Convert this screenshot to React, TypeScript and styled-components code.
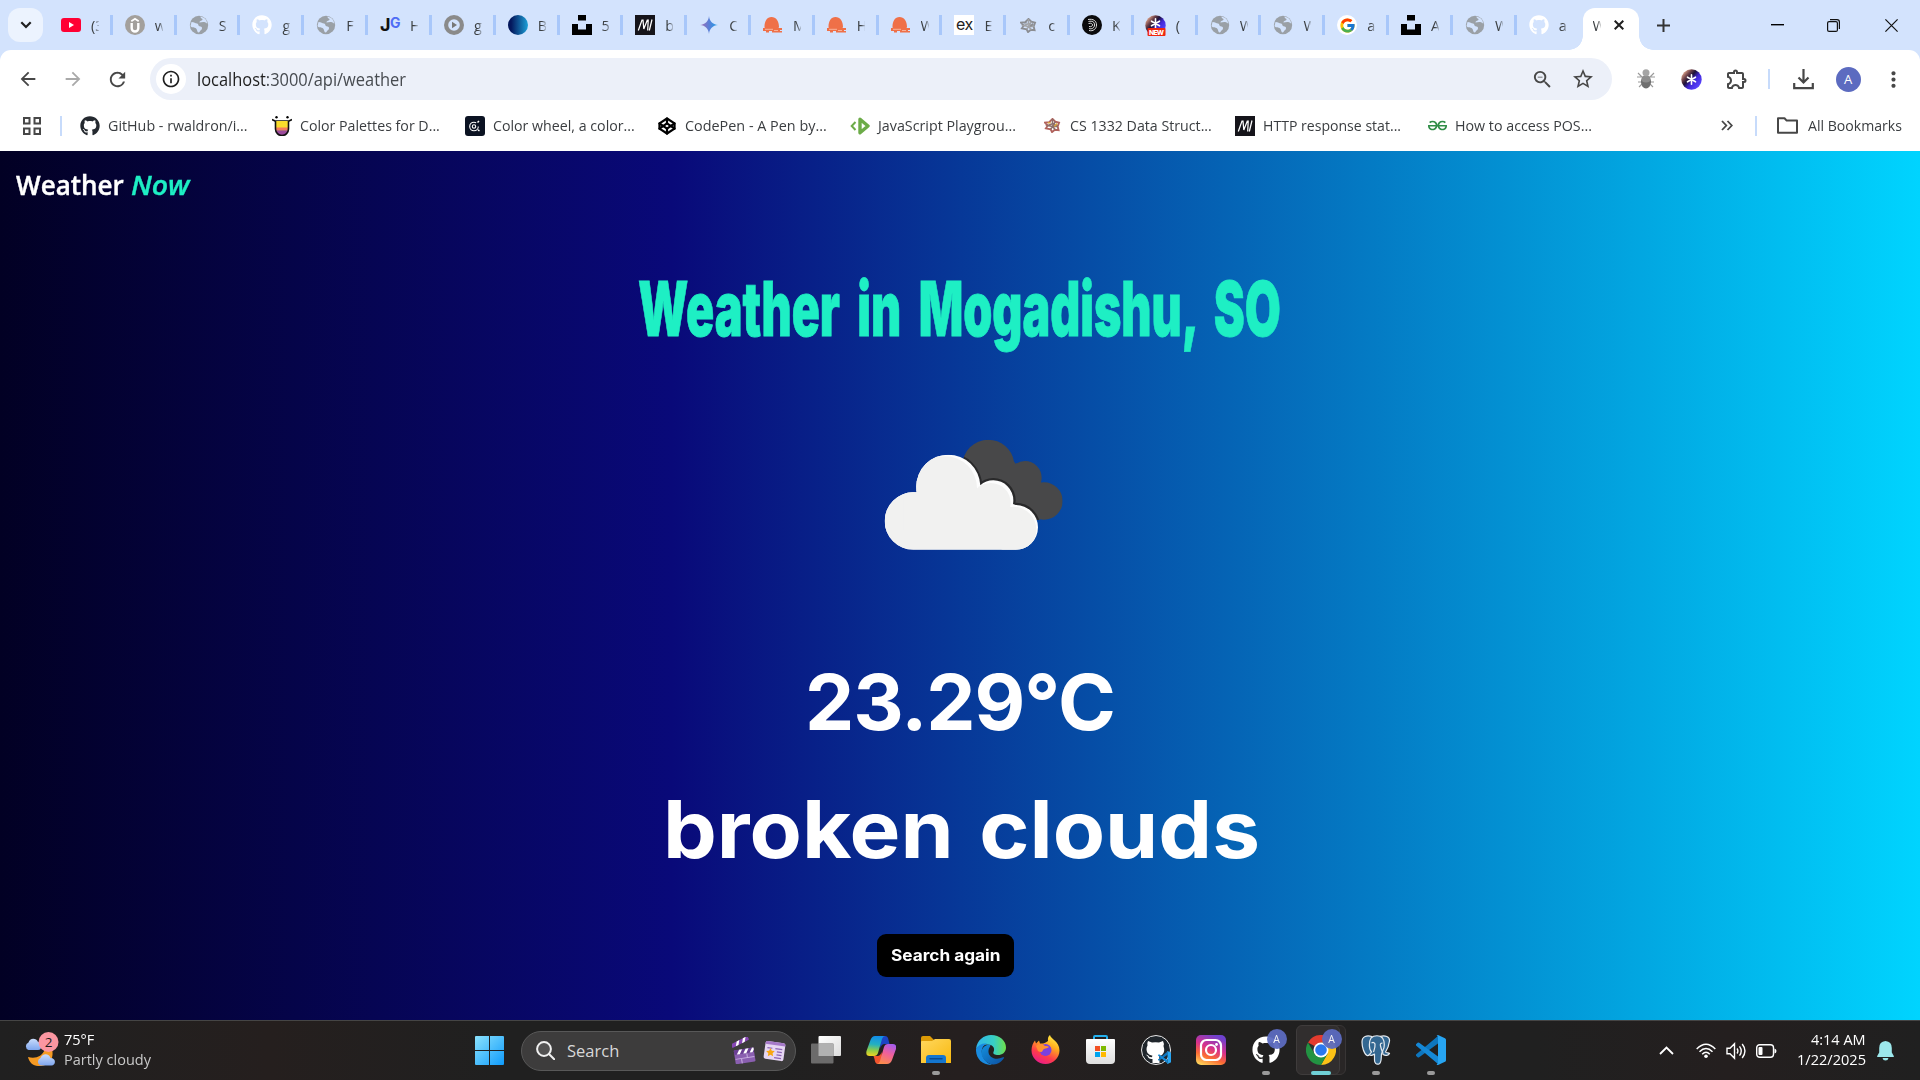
import React, { useLayoutEffect, useRef, useState } from 'react';
import styled, { createGlobalStyle } from 'styled-components';
import {
  MdArrowBack, MdArrowForward, MdRefresh, MdInfoOutline, MdZoomOut, MdStarOutline,
  MdOutlineExtension, MdMoreVert,
} from 'react-icons/md';
import { FaGithub } from 'react-icons/fa';
import { FcGoogle } from 'react-icons/fc';
import { FiCodepen } from 'react-icons/fi';
import { SiGeeksforgeeks } from 'react-icons/si';

const UI = `'Open Sans', 'Noto Sans', sans-serif`;
const DISPLAY = `Inter, 'Open Sans', sans-serif`;

const GlobalStyle = createGlobalStyle`
  * { box-sizing: border-box; }
  html, body { margin: 0; padding: 0; overflow: hidden; }
  body { font-family: ${UI}; background: #202020; }
  svg { display: block; flex: none; }
`;

/* ---------- text that is condensed or widened to a set measure ---------- */
const Measure = styled.span<{ $w: number }>`
  display: block;
  flex: none;
  width: ${p => p.$w}px;
  white-space: nowrap;
  text-align: left;
`;
const Ink = styled.span`
  display: inline-block;
  transform-origin: 0 50%;
`;
function Fit({ w, children }: { w: number; children: React.ReactNode }) {
  const ref = useRef<HTMLSpanElement>(null);
  const [scale, setScale] = useState(1);
  useLayoutEffect(() => {
    if (ref.current) setScale(w / ref.current.offsetWidth);
  }, [w]);
  return <Measure $w={w}><Ink ref={ref} style={{ transform: `scaleX(${scale})` }}>{children}</Ink></Measure>;
}

/* ---------- shell ---------- */
const Screen = styled.div`
  width: 1920px;
  height: 1080px;
  display: flex;
  flex-direction: column;
  overflow: hidden;
`;
const Slot = styled.div<{ $w: number }>`
  flex: none;
  width: ${p => p.$w}px;
  height: 100%;
  display: flex;
  align-items: center;
  justify-content: center;
`;

/* ---------- tab strip ---------- */
const TabStrip = styled.div`
  height: 50px;
  flex: none;
  display: flex;
  background: #d3e3fd;
`;
const TabSearch = styled.div`
  width: 35px;
  height: 34px;
  margin: 8px 6px 0 8px;
  border-radius: 12px;
  background: #ecf3fe;
  display: flex;
  align-items: center;
  justify-content: center;
`;
const Tab = styled.div<{ $sep: boolean }>`
  width: 63.82px;
  height: 20px;
  margin-top: 15px;
  padding-left: 12px;
  display: flex;
  align-items: center;
  gap: 10px;
  flex: none;
  border-right: 3px solid ${p => (p.$sep ? '#a8c7fa' : 'transparent')};
`;
const Favicon = styled.div`
  width: 20px;
  height: 20px;
  flex: none;
  display: flex;
  align-items: center;
  justify-content: center;
`;
const TabText = styled.div`
  width: 8px;
  overflow: hidden;
  white-space: nowrap;
  font-size: 14.5px;
  line-height: 21px;
  color: #3c4043;
  mask-image: linear-gradient(90deg, #000 50%, rgba(0, 0, 0, 0.2));
`;
const ActiveTab = styled.div`
  position: relative;
  width: 56px;
  height: 42px;
  margin: 8px 0 0 2px;
  padding: 0 15px 8px 10px;
  border-radius: 12px 12px 0 0;
  background: #fff;
  display: flex;
  align-items: center;
  justify-content: space-between;
  &::before, &::after {
    content: '';
    position: absolute;
    bottom: 0;
    width: 14px;
    height: 14px;
  }
  &::before { left: -14px; background: radial-gradient(circle at 0 0, transparent 13.5px, #fff 14px); }
  &::after { right: -14px; background: radial-gradient(circle at 100% 0, transparent 13.5px, #fff 14px); }
`;
const Grow = styled.div`flex: 1;`;

/* ---------- toolbar ---------- */
const ToolbarBack = styled.div`background: #d3e3fd; flex: none;`;
const Toolbar = styled.div`
  height: 58px;
  padding-left: 5px;
  display: flex;
  align-items: center;
  background: #fff;
  border-radius: 11px 11px 0 0;
  color: #474747;
`;
const Address = styled.div`
  width: 1462px;
  height: 42px;
  margin-left: 10px;
  margin-right: 11px;
  padding: 0 9.5px 0 6px;
  border-radius: 21px;
  background: #ecf0f9;
  display: flex;
  align-items: center;
`;
const InfoDot = styled.div`
  width: 30px;
  height: 30px;
  margin-right: 10.5px;
  border-radius: 50%;
  background: #fff;
  display: flex;
  align-items: center;
  justify-content: center;
  color: #1f1f1f;
`;
const Url = styled.div`
  font-size: 18px;
  line-height: 26px;
  color: #474b50;
  b { font-weight: 400; color: #1f1f1f; }
`;
const Divider = styled.div<{ $h: number; $m: string }>`
  flex: none;
  width: 2px;
  height: ${p => p.$h}px;
  margin: ${p => p.$m};
  background: #c7dbfb;
`;
const Avatar = styled.div<{ $s: number }>`
  width: ${p => p.$s}px;
  height: ${p => p.$s}px;
  border-radius: 50%;
  background: #5c6bc0;
  color: #fff;
  font-size: ${p => p.$s * 0.52}px;
  display: flex;
  align-items: center;
  justify-content: center;
`;

/* ---------- bookmarks ---------- */
const BookmarkBar = styled.div`
  height: 43px;
  flex: none;
  padding: 0 18px 8px 23px;
  display: flex;
  align-items: center;
  background: #fff;
  color: #474747;
`;
const Bookmark = styled.div`
  width: 192.5px;
  flex: none;
  display: flex;
  align-items: center;
  gap: 8px;
`;
const BookmarkText = styled.div`
  padding-bottom: 2px;
  font-size: 15px;
  line-height: 20px;
  color: #3a3d40;
`;

/* ---------- weather page ---------- */
const Page = styled.main`
  height: 869px;
  flex: none;
  display: flex;
  flex-direction: column;
  align-items: center;
  background: linear-gradient(90deg, #020024 0%, #090979 35%, #00d4ff 100%);
  color: #fff;
`;
const Brand = styled.div`
  width: 100%;
  height: 66px;
  padding-left: 16px;
  display: flex;
  gap: 7px;
  font-size: 27.5px;
  font-weight: 600;
  line-height: 68px;
  -webkit-text-stroke: 0.4px currentColor;
  em { color: #1eefc4; }
`;
const City = styled.h1`
  height: 90px;
  margin: 47px 2px 0 0;
  font: 900 75.6px/90px ${DISPLAY};
  word-spacing: 13px;
  color: #1eefc4;
  -webkit-text-stroke: 0.8px #1eefc4;
`;
const CloudBox = styled.div`
  margin-top: 76px;
  padding-left: 30px;
`;
const Temp = styled.h2`
  height: 100px;
  margin: 92px 1px 0 0;
  font: 700 77.5px/100px ${DISPLAY};
  letter-spacing: -1px;
`;
const Condition = styled.h2`
  height: 100px;
  margin: 27px 0 0 3px;
  font: 700 80px/100px ${DISPLAY};
  word-spacing: 5px;
`;
const SearchAgain = styled.button`
  width: 137px;
  height: 43px;
  margin: 55px 29px 0 0;
  padding: 0;
  border: 0;
  border-radius: 9px;
  background: #000;
  color: #fff;
  display: flex;
  align-items: center;
  justify-content: center;
  font: 700 15.5px/20px ${DISPLAY};
`;

/* ---------- taskbar ---------- */
const Taskbar = styled.div`
  height: 60px;
  flex: none;
  display: flex;
  align-items: center;
  background: linear-gradient(90deg, #202020, #251f1e 14%, #202020 26%, #202020 40%, #251f1f 50%, #212020 65%, #202020 80%, #241f1f 90%, #202020);
  border-top: 1px solid #454545;
`;
const Widget = styled.div`
  width: 460px;
  padding-left: 24px;
  display: flex;
  align-items: center;
  gap: 5px;
`;
const Lines = styled.div<{ $end?: boolean }>`
  display: flex;
  flex-direction: column;
  align-items: ${p => (p.$end ? 'flex-end' : 'flex-start')};
  padding-bottom: 4px;
  font-size: 15px;
  line-height: 20px;
  color: #fff;
`;
const Dim = styled.div`color: #c8c8c8;`;
const SearchPill = styled.div`
  width: 275px;
  height: 40px;
  margin-right: 2.5px;
  padding: 0 9px 0 14px;
  border-radius: 20px;
  border: 1px solid #585858;
  background: #3d3c3c;
  display: flex;
  align-items: center;
  color: #d8d8d8;
  font-size: 16.5px;
  gap: 6px;
`;
const TaskItem = styled.div`
  position: relative;
  width: 55px;
  height: 100%;
  flex: none;
  display: flex;
  align-items: center;
  justify-content: center;
`;
const ActivePlate = styled.div<{ $back?: boolean }>`
  position: absolute;
  top: 4px;
  left: ${p => (p.$back ? 12 : 2.5)}px;
  width: ${p => (p.$back ? 40 : 44)}px;
  height: 50px;
  border-radius: 6px;
  border: 1px solid ${p => (p.$back ? '#383535' : '#3f3c3c')};
  background: ${p => (p.$back ? '#292626' : '#312e2e')};
`;
const TaskIcon = styled.div`
  position: relative;
  margin-top: -2px;
  margin-right: 1px;
`;
const Running = styled.div<{ $on?: boolean }>`
  position: absolute;
  bottom: 5px;
  left: ${p => (p.$on ? 17 : 23)}px;
  width: ${p => (p.$on ? 20 : 8)}px;
  height: 4px;
  border-radius: 2px;
  background: ${p => (p.$on ? '#6fd0d6' : '#9a9a9a')};
`;
const BadgeSpot = styled.div`
  position: absolute;
  top: 8px;
  left: 28px;
  opacity: 0.95;
`;
const Tray = styled.div`
  height: 100%;
  display: flex;
  align-items: center;
  margin-left: auto;
  color: #fff;
`;

/* ---------- drawings ---------- */
const Globe = () => (
  <svg width="20" height="20" viewBox="0 0 20 20">
    <circle cx="10" cy="10" r="9.200" fill="#9aa0a6" />
    <path d="M2.500 7c3 0 3.500 1.500 5.500 1.500s.5 3 3.500 3c2 0 2 3 0 4-1 1-1 2-2 2-1.500 0-1-3.500-3-4.500s-4 0-5-2zM11.500 1.500c0 2.500 2 1.500 2 3s-3 1-3 3c2 0 4.500-1.500 7.500 1 0-4-2.500-6-6.500-7z" fill="#d3e3fd" />
  </svg>
);
const Youtube = () => (
  <svg width="20" height="14" viewBox="0 0 20 14"><rect width="20" height="14" rx="3" fill="#ff0033" /><path d="M8 4l5 3-5 3z" fill="#fff" /></svg>
);
const Udemy = () => (
  <svg width="20" height="20" viewBox="0 0 20 20"><circle cx="10" cy="10" r="10" fill="#a3a09c" /><path d="M6.700 8v5.200a3.300 3.300 0 0 0 6.600 0V8" fill="none" stroke="#fff" strokeWidth="2.400" /><path d="M6.300 6.200L10 3.800l3.700 2.400" fill="none" stroke="#fff" strokeWidth="1.800" /></svg>
);
const JG = styled.div`
  display: flex;
  align-items: flex-end;
  font: 700 18px/20px ${DISPLAY};
  color: #111;
  letter-spacing: -0.5px;
  sup { font: 700 14px/14px ${DISPLAY}; color: #4f6cf5; margin-bottom: 5px; box-shadow: -3px 5px 0 -3px transparent; }
`;
const Play = () => (
  <svg width="20" height="20" viewBox="0 0 20 20"><circle cx="10" cy="10" r="10" fill="#8a8a8a" /><circle cx="10" cy="10" r="5.800" fill="#d3e3fd" /><path d="M8 6.800l5 3.200-5 3.200z" fill="#777" /></svg>
);
const BlueBall = () => (
  <svg width="20" height="20" viewBox="0 0 20 20">
    <defs><linearGradient id="ball"><stop offset=".15" stopColor="#04175c" /><stop offset="1" stopColor="#1da0d8" /></linearGradient></defs>
    <circle cx="10" cy="10" r="10" fill="url(#ball)" />
  </svg>
);
const Unsplash = () => (
  <svg width="20" height="20" viewBox="0 0 20 20"><path d="M6 0h8v5.500H6zM0 9h6v5.500h8V9h6v11H0z" fill="#000" /></svg>
);
const Mdn = () => (
  <svg width="20" height="20" viewBox="0 0 20 20"><rect width="20" height="20" fill="#15141a" /><path d="M3.300 15.500L7 5h1l.8 9L12.300 5h.9l-.5 10.500M14.300 15.500L17 4.500" fill="none" stroke="#fff" strokeWidth="1.250" /></svg>
);
const Gemini = () => (
  <svg width="18" height="20" viewBox="0 0 20 20">
    <defs><linearGradient id="gem"><stop offset="0" stopColor="#a46bb0" /><stop offset=".5" stopColor="#5a7fd8" /><stop offset="1" stopColor="#1aa0e8" /></linearGradient></defs>
    <path d="M10 0c.6 6 4 9.400 10 10-6 .6-9.400 4-10 10-.6-6-4-9.400-10-10 6-.6 9.400-4 10-10z" fill="url(#gem)" />
  </svg>
);
const Orange = () => (
  <svg width="20" height="16" viewBox="0 0 20 16">
    <path d="M1.500 10C1.500 4 4 0 8.500 0S16 4 16 10l-.5 1H19v2h-2v1h2v1.500H9V14H6v1.500H3V14H0v-3h1.700z" fill="#ef7048" /><path d="M2 12.300h8M11 13.500h4" stroke="#fbc3ae" strokeWidth=".8" />
  </svg>
);
const Express = styled.div`
  width: 20px;
  height: 20px;
  background: #fff;
  color: #222;
  font: 400 16px/18px ${DISPLAY};
  letter-spacing: -0.5px;
  text-align: center;
`;
const Mesh = ({ gray }: { gray?: boolean }) => {
  const c = gray ? ['#8b8d92', '#a2a4a8'] : ['#b0625c', '#8c6f6a'];
  return (
    <svg width="17" height="15" viewBox="0 0 18 16" fill="none">
      <path d="M9 1l3 3 4 1-1.500 4 1 4-4-.5L8.500 15 7 12l-5-1 2-3-3-3 4.500-.5z" stroke={c[0]} strokeWidth="2" />
      <path d="M9 1v5l-5 2 5 1 3 3.500M9 6l5.500 3H9l-2 3M12 4L9 9" stroke={c[1]} strokeWidth="1.700" />
      <path d="M4 5h3M11 9l3-3" stroke={gray ? '#8b8d92' : '#d9a441'} strokeWidth="1.700" />
    </svg>
  );
};
const Knot = () => (
  <svg width="20" height="20" viewBox="0 0 20 20" fill="none" stroke="#ddd" strokeWidth="1"><circle cx="10" cy="10" r="10" fill="#0b0b0d" stroke="none" /><path d="M6 4.500c5.500-1 8.500 1.500 8.500 5.500S11 16.500 7 15.500M6.500 6.500c4-1 6 .5 6 3.500s-3 4.500-5.500 3.500M6.500 8.500c3-.7 4 .2 4 1.500s-1.500 2-3.500 1.500" /></svg>
);
const Loom = ({ fresh }: { fresh?: boolean }) => (
  <svg width="21" height="21" viewBox="0 0 21 21">
    <defs>
      <linearGradient id="loom" x1=".1" y1=".1" x2=".9" y2=".8"><stop offset="0" stopColor="#f0b296" /><stop offset=".25" stopColor="#6b4048" /><stop offset=".42" stopColor="#1d1238" /><stop offset=".65" stopColor="#4127d8" /><stop offset="1" stopColor="#5a45ff" /></linearGradient>
    </defs>
    <circle cx="10.500" cy="10.500" r="10.200" fill="url(#loom)" />
    <path d="M10.500 5.800v9.400M6.500 8.200l8 4.600M6.500 12.800l8-4.600" stroke="#fff" strokeWidth="1.600" strokeLinecap="round" transform={fresh ? 'translate(0 -2)' : undefined} />
    {fresh && <rect x="2.500" y="13" width="18" height="8" rx="1" fill="#f0260e" />}
    {fresh && <text x="4" y="19.500" fontSize="6.800" fontWeight="800" fill="#fff" fontFamily="Inter" textLength="15">NEW</text>}
  </svg>
);
const GoogleDisc = styled.div`
  width: 20px;
  height: 20px;
  border-radius: 50%;
  background: #fff;
  display: flex;
  align-items: center;
  justify-content: center;
`;
const Glass = () => (
  <svg width="20" height="20" viewBox="0 0 20 20">
    <circle cx="4.500" cy="1.300" r="1.200" /><circle cx="15.500" cy="1.300" r="1.200" />
    <path d="M0 3.500l3 1.500h14l3-1.500" fill="none" stroke="#111" strokeWidth="1.600" />
    <path d="M3.500 5h13v8a6.500 6.500 0 0 1-13 0z" fill="#f9dc2c" /><path d="M3.500 11.500h13V14h-13z" fill="#f47b5d" /><path d="M4 14.200h12c-1 7-11 7-12 0z" fill="#9c4a9b" />
    <path d="M3.500 5v8a6.500 6.500 0 0 0 13 0V5" fill="none" stroke="#111" strokeWidth="1.600" />
  </svg>
);
const Wheel = () => (
  <svg width="20" height="20" viewBox="0 0 20 20" fill="none"><rect width="20" height="20" rx="3" fill="#0b1222" /><circle cx="9" cy="10.500" r="4.300" stroke="#fff" strokeWidth="1.100" strokeDasharray="22 5" /><circle cx="9" cy="10.500" r="1.700" stroke="#fff" strokeWidth="1.100" /><path d="M12.500 6.500l1.500-1.500M13 14l1.500.8" stroke="#fff" strokeWidth="1.500" /></svg>
);
const Playground = () => (
  <svg width="20" height="18" viewBox="0 0 20 18" fill="none"><path d="M5.500 5L1.700 9l3.800 4" stroke="#6cab48" strokeWidth="2" /><path d="M10 2.200L18 9l-8 6.800z" stroke="#6cab48" strokeWidth="3.400" strokeLinejoin="round" /></svg>
);
const Download = () => (
  <svg width="21" height="21" viewBox="0 0 21 21" fill="none" stroke="#474747" strokeWidth="2.200"><path d="M10.500 0v13M5.500 8.500l5 5 5-5M1.200 14v5.200h18.600V14" /></svg>
);
const Bug = () => (
  <svg width="18" height="20" viewBox="0 0 18 20">
    <path d="M0 8h18M1 13h16M2 18l3-3M16 18l-3-3M1 4l4 4M17 4l-4 4" stroke="#9a9a9a" strokeWidth="1.100" />
    <ellipse cx="9" cy="13" rx="5" ry="6.500" fill="#6f6f6f" /><ellipse cx="9" cy="10" rx="4.500" ry="3.500" fill="#8e8e8e" /><circle cx="9" cy="3.800" r="3.500" fill="#a5a5a5" />
  </svg>
);
const AppsGrid = () => (
  <svg width="18" height="18" viewBox="0 0 18 18" fill="none" stroke="#474747" strokeWidth="2"><path d="M1 1h5.500v5.500H1zM11.500 1H17v5.500h-5.500zM1 11.500h5.500V17H1zM11.500 11.500H17V17h-5.500z" /></svg>
);
const Folder = () => (
  <svg width="21" height="17" viewBox="0 0 21 17" fill="none" stroke="#474747" strokeWidth="2"><path d="M1 1.200h6.500l2.200 2.400H20V15.700H1z" strokeLinejoin="round" /></svg>
);
const Clouds = () => (
  <svg width="210" height="130" viewBox="0 0 630 390">
    <defs>
      <clipPath id="darkShape"><circle cx="355" cy="107" r="78" /><circle cx="465" cy="143" r="50" /><circle cx="522" cy="213" r="56" /><path d="M290 110L420 80 500 180 510 269 400 280z" /></clipPath>
      <clipPath id="lightShape"><circle cx="130" cy="273" r="86" /><circle cx="235" cy="170" r="96" /><circle cx="370" cy="211" r="60" /><circle cx="437" cy="292" r="67" /><path d="M130 188L300 170 437 225V359H130z" /></clipPath>
    </defs>
    <g clipPath="url(#darkShape)">
      <rect width="630" height="390" fill="#484849" />
      <g fill="#29292a"><circle cx="235" cy="170" r="102" /><circle cx="370" cy="211" r="67" /><circle cx="437" cy="292" r="74" /></g>
    </g>
    <g clipPath="url(#lightShape)">
      <rect width="630" height="390" fill="#fdfdfd" />
      <g fill="#f1f1f0"><circle cx="226" cy="174" r="95" /><circle cx="362" cy="219" r="60" /><circle cx="430" cy="299" r="69" /><path d="M0 180h290l80 40 60 20 50 60v90H0z" /><path d="M100 0h110v300H100z" /></g>
    </g>
  </svg>
);
const WeatherIcon = () => (
  <svg width="35" height="37" viewBox="0 0 35 37">
    <defs><linearGradient id="cl" x2="0" y2="1"><stop stopColor="#c9dcfb" /><stop offset="1" stopColor="#7fa6ee" /></linearGradient></defs>
    <path d="M4 25c7 2 14 0 17-8h7c3 12-6 18-14 17-5 0-9-4-10-9z" fill="#f59a23" />
    <path d="M4.500 18a4 4 0 0 1 0-7.500C5.500 5.500 12.500 5.500 14 10c4 0 5 8 0 8z" fill="url(#cl)" />
    <path d="M16.500 33.500a4 4 0 0 1 0-7.500c2-5.500 9-4.500 10 0 6 0 5.500 7.500 1 7.500z" fill="url(#cl)" />
    <circle cx="24.500" cy="10" r="10" fill="#fb96a1" />
    <text x="24.500" y="14.800" textAnchor="middle" fontFamily="Open Sans" fontSize="13.500" fill="#1b1b1b">2</text>
  </svg>
);
const Windows = () => (
  <svg width="29" height="29" viewBox="0 0 29 29">
    <defs><linearGradient id="win" x1="0" y1="0" x2="1" y2="1"><stop stopColor="#8be2fd" /><stop offset="1" stopColor="#0f9bfb" /></linearGradient></defs>
    <path d="M0 1q0-1 1-1h13v14H0zM15 0h13q1 0 1 1v13H15zM0 15h14v14H1q-1 0-1-1zM15 15h14v13q0 1-1 1H15z" fill="url(#win)" />
  </svg>
);
const Lens = () => (
  <svg width="19" height="19" viewBox="0 0 19 19" fill="none" stroke="#f0f0f0" strokeWidth="2"><circle cx="8" cy="8" r="6.900" fill="#535252" /><path d="M13 13l5.200 5.200" strokeLinecap="round" /></svg>
);
const Clapper = () => (
  <svg width="25" height="27" viewBox="0 0 25 27">
    <g transform="rotate(-9 12 18)"><rect x="2.500" y="12" width="20" height="14" rx="1" fill="#8a5fb0" /><rect x="2.500" y="12" width="20" height="4.500" fill="#6b3f94" /><path d="M5 16.500l3-4.500h3l-3 4.500zM11.500 16.500l3-4.500h3l-3 4.500zM18 16.500l3-4.500h1.500v2l-1.700 2.500z" fill="#fff" /><path d="M3 21h19M9 21v5M15 17v4" stroke="#c9aee0" /></g>
    <g transform="rotate(-27 2 8)"><rect x="-1" y="6" width="19" height="4" rx="1" fill="#8747b5" /><path d="M3 10L6 6h3l-3 4zM10 10l3-4h3l-3 4z" fill="#fff" /></g>
  </svg>
);
const News = () => (
  <svg width="23" height="22" viewBox="0 0 23 22">
    <g transform="rotate(8 11 11)"><rect x="1.500" y="2" width="20" height="18" rx="2" fill="#e6d6f3" /><path d="M1.500 5V4q0-2 2-2h16q2 0 2 2v1z" fill="#a679c9" /><path d="M12 8.500h7M14 11.500h5M14 14.500h5M12 17.500h7M4 8.500h5" stroke="#8d63b5" strokeWidth="1.200" /></g>
    <path d="M7.500 8l1.300 2.700 3 .4-2.200 2.200.5 3-2.600-1.500-2.700 1.500.5-3-2.200-2.200 3-.4z" fill="#f8a712" />
  </svg>
);
const TaskView = () => (
  <svg width="30" height="28" viewBox="0 0 30 28">
    <defs><linearGradient id="tv" x2="1" y2="1"><stop stopColor="#fff" /><stop offset="1" stopColor="#dcdcdc" /></linearGradient></defs>
    <rect x="7.500" width="22.500" height="20" rx="1" fill="url(#tv)" /><rect y="7.500" width="22.500" height="20" rx="1" fill="#6c6b6b" /><path d="M7.500 7.500h15V20h-15z" fill="#b1b1b1" />
  </svg>
);
const Copilot = () => (
  <svg width="30" height="28" viewBox="0 0 30 28">
    <defs>
      <linearGradient id="cpa" x1=".3" y1="0" x2=".2" y2="1"><stop stopColor="#128ee8" /><stop offset=".4" stopColor="#23b0c0" /><stop offset=".7" stopColor="#8ccc4a" /><stop offset="1" stopColor="#f4d420" /></linearGradient>
      <linearGradient id="cpb" x1=".8" y1="0" x2=".4" y2="1"><stop stopColor="#a45cf0" /><stop offset=".5" stopColor="#f0609a" /><stop offset="1" stopColor="#fb8a4e" /></linearGradient>
    </defs>
    <path d="M13 0h6q3 0 3.500 4l1 4h-5q-3 0-4 4z" fill="#1c44c4" />
    <path d="M17 28h-5q-3 0-3.500-5L7.500 20h4q3 0 4-4z" fill="#f2542e" />
    <path d="M9 0h10q-2 0-3 3l-4 14q-1 3-4 3H3.500q-4 0-3-5L4.500 4Q6 0 9 0z" fill="url(#cpa)" />
    <path d="M21 28H11q2 0 3-3l4-14q1-3 4-3h5q4 0 3 5l-4 11q-1.500 4-5 4z" fill="url(#cpb)" />
  </svg>
);
const Explorer = () => (
  <svg width="30" height="28" viewBox="0 0 30 28">
    <defs><linearGradient id="ex" x2="1" y2="1"><stop stopColor="#ffd75e" /><stop offset="1" stopColor="#f8b90f" /></linearGradient></defs>
    <path d="M0 2q0-2 2-2h7l4 4H29v5H0z" fill="#dc9a06" /><path d="M0 6q0-1 1-1h10l3-2h14q2 0 2 2v22H0z" fill="url(#ex)" />
    <path d="M5 27v-5q0-3 3-3h14q3 0 3 3v5z" fill="#1476cf" /><path d="M9 22.700h12" stroke="#084a91" strokeWidth="1.500" strokeLinecap="round" />
  </svg>
);
const Edge = () => (
  <svg width="30" height="30" viewBox="0 0 30 30">
    <defs><linearGradient id="eg" x2="1"><stop stopColor="#2fb5ee" /><stop offset=".6" stopColor="#38cfc4" /><stop offset="1" stopColor="#6fe04a" /></linearGradient><linearGradient id="eb" x2="1" y2="1"><stop stopColor="#1490de" /><stop offset="1" stopColor="#0c4fa0" /></linearGradient></defs>
    <path d="M0 14C1 5 8 0 15 0c9 0 15 6 15 12.500 0 5-4 7.500-8 7.500-3 0-5.500-1-4.500-3 2-4-1-7.500-6-7.500-5 0-9 2-11.500 4.500z" fill="url(#eg)" />
    <path d="M0 14c2-4 6-6 11-5.500-4 2-6 5-5 10 1 6 6 11 11 11.300C7 31-.5 24 0 14z" fill="#1a8be0" />
    <path d="M11 10c-5 2-7 7-4.500 12 3 6 9 8.500 14 7 3.500-1 6-3.500 7.500-6 .5-1-.5-1-1-.7-8 3.700-15-.5-14.500-6.500 0-3 2-4 2-5.500-1-1-2.500-.8-3.500-.3z" fill="url(#eb)" />
  </svg>
);
const Firefox = () => (
  <svg width="29" height="29" viewBox="0 0 29 29">
    <defs><linearGradient id="ff" x1=".8" y1="0" x2=".3" y2="1"><stop stopColor="#fff24a" /><stop offset=".35" stopColor="#ffac1e" /><stop offset=".7" stopColor="#ff3c4a" /><stop offset="1" stopColor="#e81b8b" /></linearGradient></defs>
    <path d="M17 6c-.5-3 .5-5 2-6 .5 4 9.500 6 9.500 15.500C28.500 23 22 29 14.500 29S.5 23 .5 15.500C.5 11 2 8 4 5.500l1 3 3-3 1 3h3c1 0 3-1 5-2.500z" fill="url(#ff)" />
    <circle cx="14.500" cy="15" r="6" fill="#7a41de" /><path d="M5 11c3-3 7-2 9 0 2 0 3 0 4 1-2 2-5 1-6 3-1 3-3 2-5 1z" fill="#ff9130" />
  </svg>
);
const Store = () => (
  <svg width="29" height="29" viewBox="0 0 29 29">
    <defs><linearGradient id="st" x2="0" y2="1"><stop stopColor="#fff" /><stop offset="1" stopColor="#dedede" /></linearGradient></defs>
    <path d="M8 6V2q0-1 1-1h11q1 0 1 1v4" fill="none" stroke="#25b1ee" strokeWidth="2" /><path d="M0 5q0-1 1-1h27q1 0 1 1v20q0 4-4 4H4q-4 0-4-4z" fill="url(#st)" />
    <path d="M9 11h5v5H9z" fill="#f25022" /><path d="M15 11h5v5h-5z" fill="#7fba00" /><path d="M9 17h5v5H9z" fill="#00a4ef" /><path d="M15 17h5v5h-5z" fill="#ffb900" />
  </svg>
);
const CodeMark = ({ s }: { s: number }) => (
  <svg width={s} height={s} viewBox="0 0 30 30">
    <path d="M0 19.500q-.4.600 0 1.200l1.600 1.500q.8.600 1.600 0L22 8.500V1z" fill="#0e76be" />
    <path d="M0 10.500q-.4-.6 0-1.200l1.600-1.500q.8-.6 1.600 0L22 21.500V29z" fill="#1588d6" />
    <path d="M22 0l7 3.200q1 .5 1 1.600v20.400q0 1.100-1 1.600L22 30q-1 0-1.500-.6Q22 29.500 22 27V3q0-2.500-1.500-2.400Q21 0 22 0z" fill="#27a5f2" />
  </svg>
);
const CodespaceWrap = styled.div`
  position: relative;
  width: 30px;
  height: 30px;
  border-radius: 50%;
  border: 1.5px solid #e8e8e8;
  background: #20262c;
`;
const Corner = styled.div`position: absolute; right: -1px; bottom: 0;`;
const Cat = () => (
  <svg width="27" height="27" viewBox="0 0 27 27"><path d="M6 5l4 1.500q3.500-.6 7 0L21 5q1.500 3 .5 5 2 6-1.500 9-2 1-3 1.200.5 1 .5 6.800h-7v-4q-4 .5-5-3l-2-1.500q3 0 4 2.500l2.500.3q0-1 .5-1.600-3.500-.3-5-2.700-2-4 0-7.500-.8-2 .5-4.500z" fill="#fff" /></svg>
);
const Instagram = () => (
  <svg width="30" height="30" viewBox="0 0 30 30" fill="none">
    <defs><linearGradient id="ig" x1=".2" y1="1" x2=".6" y2="0"><stop stopColor="#fed45a" /><stop offset=".3" stopColor="#fb6b34" /><stop offset=".6" stopColor="#d8308c" /><stop offset="1" stopColor="#6f42cf" /></linearGradient></defs>
    <rect width="30" height="30" rx="5" fill="url(#ig)" /><rect x="5" y="5" width="20" height="20" rx="5.500" stroke="#fff" strokeWidth="2.200" /><circle cx="15" cy="15" r="5" stroke="#fff" strokeWidth="2.200" /><circle cx="20.500" cy="9.500" r="1.400" fill="#fff" />
  </svg>
);
const Chrome = () => (
  <svg width="30" height="30" viewBox="0 0 30 30">
    <path d="M2 7.500A15 15 0 0 1 28 7.500H15L8.500 11z" fill="#e33b2e" /><path d="M28 7.500A15 15 0 0 1 15 30l6.500-11.300L21.500 11 15 7.500z" fill="#fbc116" /><path d="M2 7.500A15 15 0 0 0 15 30l6.500-11.200L15 22l-6.500-3.200z" fill="#229342" />
    <circle cx="15" cy="15" r="7.500" fill="#fff" /><circle cx="15" cy="15" r="5.800" fill="#2a78ee" />
  </svg>
);
const Elephant = () => (
  <svg width="30" height="30" viewBox="0 0 30 30" fill="#336791" stroke="#e6ebf0" strokeWidth="1.200" strokeLinejoin="round">
    <path d="M11 1.500C6 0 1 1 1 7c0 5 2 12 5 13.500 1.500.5 3-1 4.500-2.500z" />
    <path d="M19 1.500c5-1.500 10 0 9.500 4.500-.5 4-2 8-4 11 1 1.500 3 .5 4 1.500-1 2-4 2.500-6.500 1z" />
    <path d="M10 3c3-3 9-3 11.500 0 2 3 2.500 9 .5 12l-1.500 4c-.5 4 .3 9-2.500 10-3 .8-4.500-1-4.500-4v-6c-2 1.500-4 2-5 .5l2-2.500c-3-3-2.500-11-.5-14z" />
    <path d="M10.500 8c1.500-1 3-.5 3.500 1 .4 3-.5 5-1.500 8M21.500 8c-2 0-2.500 1-2 3s1 4 2 6" fill="none" />
  </svg>
);
const Up = () => (
  <svg width="15" height="9" viewBox="0 0 15 9" fill="none" stroke="#fff" strokeWidth="1.800"><path d="M1 8l6.500-6.500L14 8" /></svg>
);
const Wifi = () => (
  <svg width="20" height="16" viewBox="0 0 20 16" fill="none" stroke="#fff" strokeWidth="1.500"><path d="M.7 6Q10-3.500 19.300 6M3.500 8.700q6.500-6.500 13 0M6.200 11.200q3.800-3.800 7.600 0" /><circle cx="10" cy="13.300" r="1.800" fill="#fff" stroke="none" /></svg>
);
const Volume = () => (
  <svg width="21" height="18" viewBox="0 0 21 18" fill="none" stroke="#fff" strokeWidth="1.400"><path d="M1 6.200h3l4.500-4.500v14.600L4 11.800H1zM11 6.500q1.800 2.500 0 5M13.500 4.300q3.500 4.700 0 9.400M16.200 2q5.500 7 0 14" /></svg>
);
const Battery = () => (
  <svg width="21" height="14" viewBox="0 0 21 14" fill="none"><rect x=".7" y=".7" width="16.800" height="12.600" rx="3" stroke="#fff" strokeWidth="1.400" /><rect x="2.500" y="3" width="4" height="8" rx="1" fill="#fff" /><path d="M18.500 4.500q2 .5 2 2.500t-2 2.500z" fill="#fff" /></svg>
);
const Bell = () => (
  <svg width="17" height="20" viewBox="0 0 17 20" fill="#9ce8ec"><path d="M8.500 0Q14.800.5 14.800 7v4.500L16.800 15v1H.2v-1l2-3.500V7Q2.200.5 8.500 0zM5.500 17h6q-.5 2.500-3 2.500t-3-2.500z" /></svg>
);

const hub = <FaGithub size={20} color="#fff" />;
const tabs: [React.ReactNode, string][] = [
  [<Youtube />, '(3'], [<Udemy />, 'w'], [<Globe />, 'S'], [hub, 'g'], [<Globe />, 'F'],
  [<JG>J<sup>G</sup></JG>, 'H'], [<Play />, 'g'], [<BlueBall />, 'B'],
  [<Unsplash />, '5'], [<Mdn />, 'b'], [<Gemini />, 'C'], [<Orange />, 'M'], [<Orange />, 'H'], [<Orange />, 'W'],
  [<Express>ex</Express>, 'E'], [<Mesh gray />, 'c'], [<Knot />, 'K'], [<Loom fresh />, '('], [<Globe />, 'W'],
  [<Globe />, 'W'], [<GoogleDisc><FcGoogle size={17} /></GoogleDisc>, 'a'], [<Unsplash />, 'A'], [<Globe />, 'W'], [hub, 'a'],
];
const bookmarks: [React.ReactNode, string, number][] = [
  [<FaGithub size={20} color="#24292f" />, 'GitHub - rwaldron/i...', 140],
  [<Glass />, 'Color Palettes for D...', 140],
  [<Wheel />, 'Color wheel, a color...', 142],
  [<FiCodepen size={18} color="#000" strokeWidth={3} />, 'CodePen - A Pen by...', 142],
  [<Playground />, 'JavaScript Playgrou...', 138],
  [<Mesh />, 'CS 1332 Data Struct...', 142],
  [<Mdn />, 'HTTP response stat...', 138],
  [<SiGeeksforgeeks size={19} color="#2f8d46" />, 'How to access POS...', 137],
];
const apps: { icon: React.ReactNode; run?: boolean; on?: boolean; badge?: boolean }[] = [
  { icon: <TaskView /> }, { icon: <Copilot /> }, { icon: <Explorer />, run: true }, { icon: <Edge /> }, { icon: <Firefox /> },
  { icon: <Store /> },
  { icon: <CodespaceWrap><Cat /><Corner><CodeMark s={13} /></Corner></CodespaceWrap> },
  { icon: <Instagram /> }, { icon: <FaGithub size={28} color="#fff" />, run: true, badge: true },
  { icon: <Chrome />, run: true, on: true, badge: true }, { icon: <Elephant />, run: true }, { icon: <CodeMark s={30} />, run: true },
];

export default function App() {
  return (
    <Screen>
      <GlobalStyle />
      <TabStrip>
        <TabSearch><svg width="12" height="8" viewBox="0 0 12 8" fill="none" stroke="#1f1f1f" strokeWidth="2.200"><path d="M1.300 1.300L6 6l4.700-4.700" /></svg></TabSearch>
        {tabs.map(([icon, text], i) => (
          <Tab key={i} $sep={i < 23}><Favicon>{icon}</Favicon><TabText>{text}</TabText></Tab>
        ))}
        <ActiveTab>
          <TabText>W</TabText>
          <svg width="10" height="10" viewBox="0 0 10 10" stroke="#1f1f1f" strokeWidth="2"><path d="M.7.7l8.600 8.600M9.300.7L.7 9.300" /></svg>
        </ActiveTab>
        <Slot $w={49}><svg width="13" height="13" viewBox="0 0 13 13" stroke="#333" strokeWidth="2"><path d="M6.500 0v13M0 6.500h13" /></svg></Slot>
        <Grow />
        <Slot $w={56.5}><svg width="13" height="2" viewBox="0 0 13 2"><path d="M0 0h13v1.400H0z" /></svg></Slot>
        <Slot $w={56.5}><svg width="13" height="13" viewBox="0 0 13 13" fill="none" stroke="#111" strokeWidth="1.200"><rect x=".6" y="2.600" width="9.800" height="9.800" rx="1.500" /><path d="M3 .6h7q2.400 0 2.400 2.400v7" /></svg></Slot>
        <Slot $w={58}><svg width="13" height="13" viewBox="0 0 13 13" stroke="#111" strokeWidth="1.200"><path d="M.4.4l12.200 12.200M12.600.4L.4 12.600" /></svg></Slot>
      </TabStrip>

      <ToolbarBack>
        <Toolbar>
          <Slot $w={45}><MdArrowBack size={22} /></Slot>
          <Slot $w={45}><MdArrowForward size={22} color="#a9a9a9" /></Slot>
          <Slot $w={45}><MdRefresh size={23} /></Slot>
          <Address>
            <InfoDot><MdInfoOutline size={20} /></InfoDot>
            <Url><Fit w={209}><b>localhost</b>:3000/api/weather</Fit></Url>
            <Grow />
            <Slot $w={40}><MdZoomOut size={23} /></Slot>
            <Slot $w={40}><MdStarOutline size={24} /></Slot>
          </Address>
          <Slot $w={45.5}><Bug /></Slot>
          <Slot $w={45.5}><Loom /></Slot>
          <Slot $w={45.5}><MdOutlineExtension size={24} /></Slot>
          <Divider $h={20} $m="0 11px 0 8px" />
          <Slot $w={45}><Download /></Slot>
          <Slot $w={45}><Avatar $s={25}>A</Avatar></Slot>
          <Slot $w={45}><MdMoreVert size={25} /></Slot>
        </Toolbar>
      </ToolbarBack>

      <BookmarkBar>
        <AppsGrid />
        <Divider $h={20} $m="0 17.5px 0 19px" />
        {bookmarks.map(([icon, text, w]) => (
          <Bookmark key={text}><Favicon>{icon}</Favicon><BookmarkText><Fit w={w}>{text}</Fit></BookmarkText></Bookmark>
        ))}
        <Grow />
        <svg width="12" height="11" viewBox="0 0 12 11" fill="none" stroke="#474747" strokeWidth="1.800"><path d="M1 1l4.300 4.500L1 10M6.500 1l4.300 4.500L6.500 10" /></svg>
        <Divider $h={20} $m="0 20px 0 22px" />
        <Folder />
        <Slot $w={10} />
        <BookmarkText><Fit w={94}>All Bookmarks</Fit></BookmarkText>
      </BookmarkBar>

      <Page>
        <Brand><Fit w={108}>Weather</Fit><em><Fit w={59}>Now</Fit></em></Brand>
        <City><Fit w={643}>Weather in Mogadishu, SO</Fit></City>
        <CloudBox><Clouds /></CloudBox>
        <Temp><Fit w={310}>23.29°C</Fit></Temp>
        <Condition><Fit w={597}>broken clouds</Fit></Condition>
        <SearchAgain><Fit w={110}>Search again</Fit></SearchAgain>
      </Page>

      <Taskbar>
        <Widget>
          <WeatherIcon />
          <Lines><Fit w={30}>75°F</Fit><Dim><Fit w={87}>Partly cloudy</Fit></Dim></Lines>
        </Widget>
        <Slot $w={58}><Windows /></Slot>
        <Slot $w={3} />
        <SearchPill><Lens /><Slot $w={0} /><Fit w={52}>Search</Fit><Grow /><Clapper /><News /></SearchPill>
        {apps.map((a, i) => (
          <TaskItem key={i}>
            {a.on && <><ActivePlate $back /><ActivePlate /></>}
            <TaskIcon>{a.icon}</TaskIcon>
            {a.badge && <BadgeSpot><Avatar $s={20}>A</Avatar></BadgeSpot>}
            {a.run && <Running $on={a.on} />}
          </TaskItem>
        ))}
        <Tray>
          <Slot $w={40}><Up /></Slot>
          <Slot $w={5} />
          <Slot $w={30}><Wifi /></Slot>
          <Slot $w={30}><Volume /></Slot>
          <Slot $w={30}><Battery /></Slot>
          <Slot $w={16} />
          <Lines $end><Fit w={55}>4:14 AM</Fit><Fit w={69}>1/22/2025</Fit></Lines>
          <Slot $w={38}><Bell /></Slot>
          <Slot $w={16} />
        </Tray>
      </Taskbar>
    </Screen>
  );
}
